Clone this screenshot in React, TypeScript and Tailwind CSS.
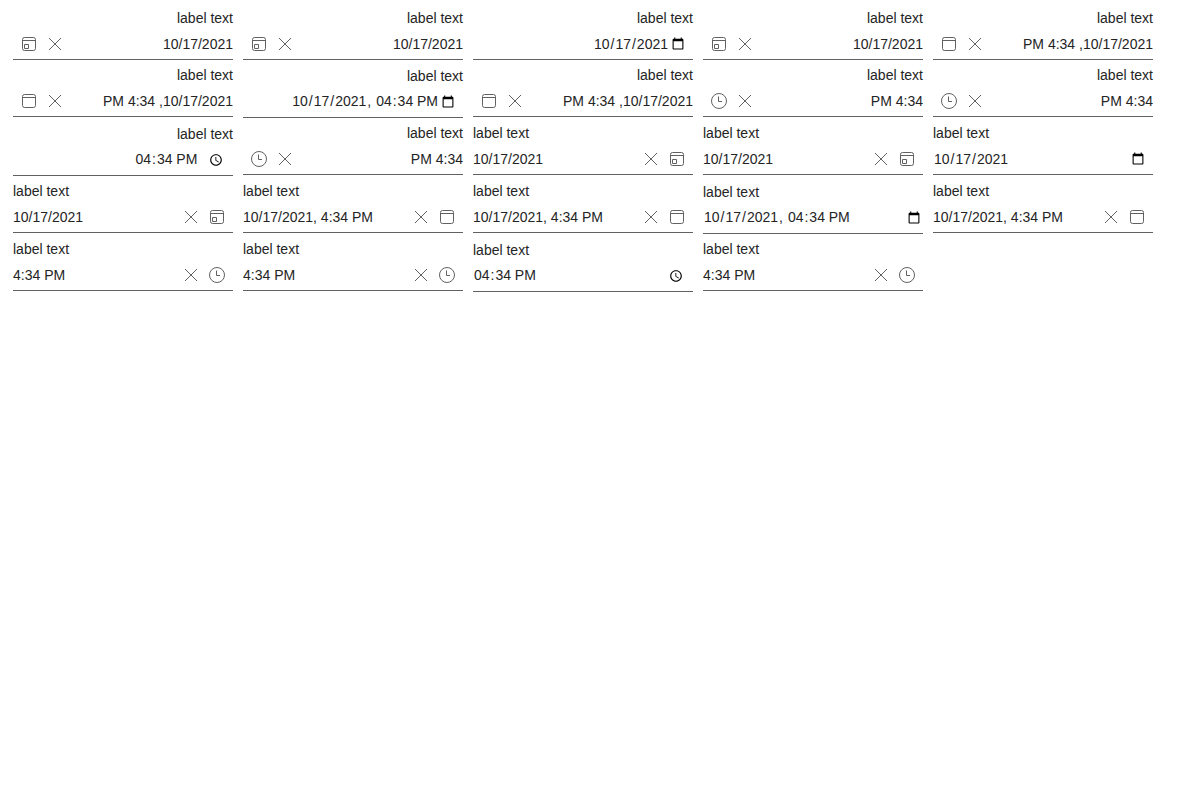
type IconKind = "date" | "datetime" | "time";

type NativeKind = "date" | "datetime-local" | "time";

interface Field {
  rtl?: boolean;
  value: string;
  icon?: IconKind;
  native?: NativeKind;
}

const D = "10/17/2021";
const DT = "10/17/2021, 4:34 PM";
const T = "4:34 PM";
const RDT = "PM 4:34 ,10/17/2021";
const RT = "PM 4:34";

const rows: Field[][] = [
  [
    { rtl: true, value: D, icon: "date" },
    { rtl: true, value: D, icon: "date" },
    { rtl: true, value: "2021-10-17", native: "date" },
    { rtl: true, value: D, icon: "date" },
    { rtl: true, value: RDT, icon: "datetime" },
  ],
  [
    { rtl: true, value: RDT, icon: "datetime" },
    { rtl: true, value: "2021-10-17T16:34", native: "datetime-local" },
    { rtl: true, value: RDT, icon: "datetime" },
    { rtl: true, value: RT, icon: "time" },
    { rtl: true, value: RT, icon: "time" },
  ],
  [
    { rtl: true, value: "16:34", native: "time" },
    { rtl: true, value: RT, icon: "time" },
    { value: D, icon: "date" },
    { value: D, icon: "date" },
    { value: "2021-10-17", native: "date" },
  ],
  [
    { value: D, icon: "date" },
    { value: DT, icon: "datetime" },
    { value: DT, icon: "datetime" },
    { value: "2021-10-17T16:34", native: "datetime-local" },
    { value: DT, icon: "datetime" },
  ],
  [
    { value: T, icon: "time" },
    { value: T, icon: "time" },
    { value: "16:34", native: "time" },
    { value: T, icon: "time" },
  ],
];

function KindIcon({ kind }: { kind: IconKind }) {
  return (
    <svg width="16" height="16" viewBox="0 0 16 16" fill="none" stroke="#616161" className="shrink-0">
      {kind === "time" ? (
        <>
          <circle cx="8" cy="8" r="7.5" />
          <path d="M7.5 3.5v5H11" />
        </>
      ) : (
        <>
          <rect x="1.5" y="1.5" width="13" height="13" rx="2" />
          <path d="M1.5 4.5h13" />
          {kind === "date" && <path d="M3.5 8.5h4v4h-4z" />}
        </>
      )}
    </svg>
  );
}

function ClearIcon() {
  return (
    <svg width="16" height="16" viewBox="0 0 16 16" stroke="#616161" className="shrink-0">
      <path d="M2 2l12 12M14 2L2 14" />
    </svg>
  );
}

function NativeInput({ field }: { field: Field }) {
  const tall = field.native !== "date";
  const lift = tall
    ? "[&::-webkit-datetime-edit]:-translate-y-px [&::-webkit-datetime-edit-ampm-field]:-ml-px"
    : "";
  const gap =
    field.native === "time"
      ? "[&::-webkit-calendar-picker-indicator]:ml-2"
      : "[&::-webkit-calendar-picker-indicator]:ml-0";
  const end = field.rtl ? `[&::-webkit-datetime-edit]:justify-end ${gap}` : "";
  const pad = field.native === "datetime-local" && !field.rtl ? "pr-0" : "pr-1.5";
  return (
    <input
      type={field.native}
      defaultValue={field.value}
      aria-label="label text"
      className={`block h-[30px] w-full text-sm outline-none ${pad} ${lift} ${end}`}
    />
  );
}

function FieldBox({ field }: { field: Field }) {
  const tall = field.native === "datetime-local" || field.native === "time";
  return (
    <div dir={field.rtl ? "rtl" : "ltr"} className={`w-[220px] ${tall ? "pt-px" : ""}`}>
      <div className="h-[21px] leading-5">label text</div>
      <div className="flex h-[31px] items-center border-b border-[#616161]">
        {field.native ? (
          <NativeInput field={field} />
        ) : (
          <>
            <span dir="ltr" className="grow text-left whitespace-pre">
              <span className={field.rtl ? "block text-right" : "block"}>{field.value}</span>
            </span>
            <span className="flex gap-2.5 pe-2">
              <ClearIcon />
              <KindIcon kind={field.icon ?? "date"} />
            </span>
          </>
        )}
      </div>
    </div>
  );
}

export default function App() {
  return (
    <main className="min-h-screen bg-white px-[13px] pt-2 font-['Liberation_Sans',Arial,sans-serif] text-sm text-[#242424]">
      {rows.map((row, i) => (
        <div key={i} className={`flex items-start gap-2.5 ${i === 0 ? "h-[57px]" : "h-[58px]"}`}>
          {row.map((field, j) => (
            <FieldBox key={j} field={field} />
          ))}
        </div>
      ))}
    </main>
  );
}
